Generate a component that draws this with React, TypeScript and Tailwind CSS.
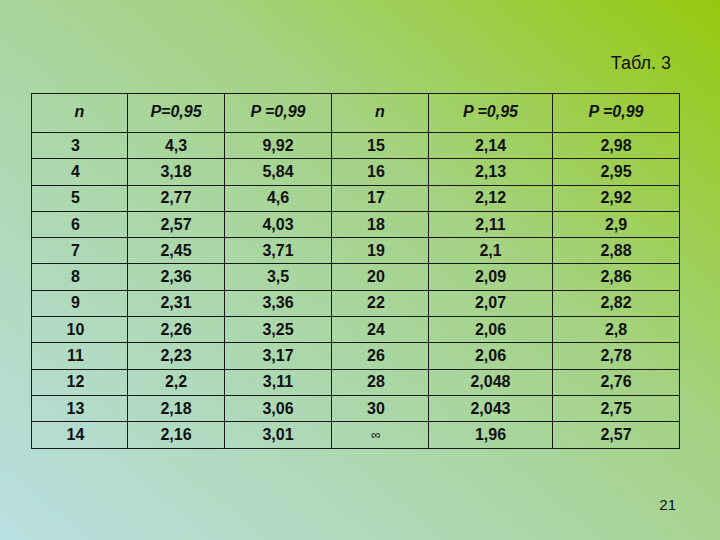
const header = ["n", "P=0,95", "P =0,99", "n", "P =0,95", "P =0,99"];

const rows: string[][] = [
  ["3", "4,3", "9,92", "15", "2,14", "2,98"],
  ["4", "3,18", "5,84", "16", "2,13", "2,95"],
  ["5", "2,77", "4,6", "17", "2,12", "2,92"],
  ["6", "2,57", "4,03", "18", "2,11", "2,9"],
  ["7", "2,45", "3,71", "19", "2,1", "2,88"],
  ["8", "2,36", "3,5", "20", "2,09", "2,86"],
  ["9", "2,31", "3,36", "22", "2,07", "2,82"],
  ["10", "2,26", "3,25", "24", "2,06", "2,8"],
  ["11", "2,23", "3,17", "26", "2,06", "2,78"],
  ["12", "2,2", "3,11", "28", "2,048", "2,76"],
  ["13", "2,18", "3,06", "30", "2,043", "2,75"],
  ["14", "2,16", "3,01", "∞", "1,96", "2,57"],
];

const colWidths = ["w-[96px]", "w-[97px]", "w-[107px]", "w-[97px]", "w-[124px]", "w-[127px]"];

export default function App() {
  return (
    <div className="w-[720px] h-[540px] flex flex-col bg-[linear-gradient(40deg,#b9e0e2_0%,#acd8b0_35%,#a4d282_62%,#95c90e_100%)] font-['Liberation_Sans',Arial,sans-serif] text-[#111]">
      <div className="pt-[52px] pr-[49px] text-right text-[18px] leading-[22px]">Табл. 3</div>
      <div className="pt-[19px] pl-[31px]">
        <table className="border-collapse border border-[#1a1a1a] table-fixed">
          <thead>
            <tr className="h-[39px]">
              {header.map((h, i) => (
                <th
                  key={i}
                  className={`${colWidths[i]} border border-[#1a1a1a] text-center text-[16px] font-bold italic pb-[3px]`}
                >
                  {h}
                </th>
              ))}
            </tr>
          </thead>
          <tbody>
            {rows.map((row, r) => (
              <tr key={r} className="h-[26.3px]">
                {row.map((cell, c) => (
                  <td
                    key={c}
                    className={`border border-[#1a1a1a] text-center font-bold leading-none ${
                      cell === "∞" ? "text-[13px] font-normal" : "text-[16px]"
                    } ${c === 0 || c === 3 ? "pr-[8px]" : ""}`}
                  >
                    {cell}
                  </td>
                ))}
              </tr>
            ))}
          </tbody>
        </table>
      </div>
      <div className="mt-auto pb-[24px] pr-[44px] text-right text-[15px]">21</div>
    </div>
  );
}
